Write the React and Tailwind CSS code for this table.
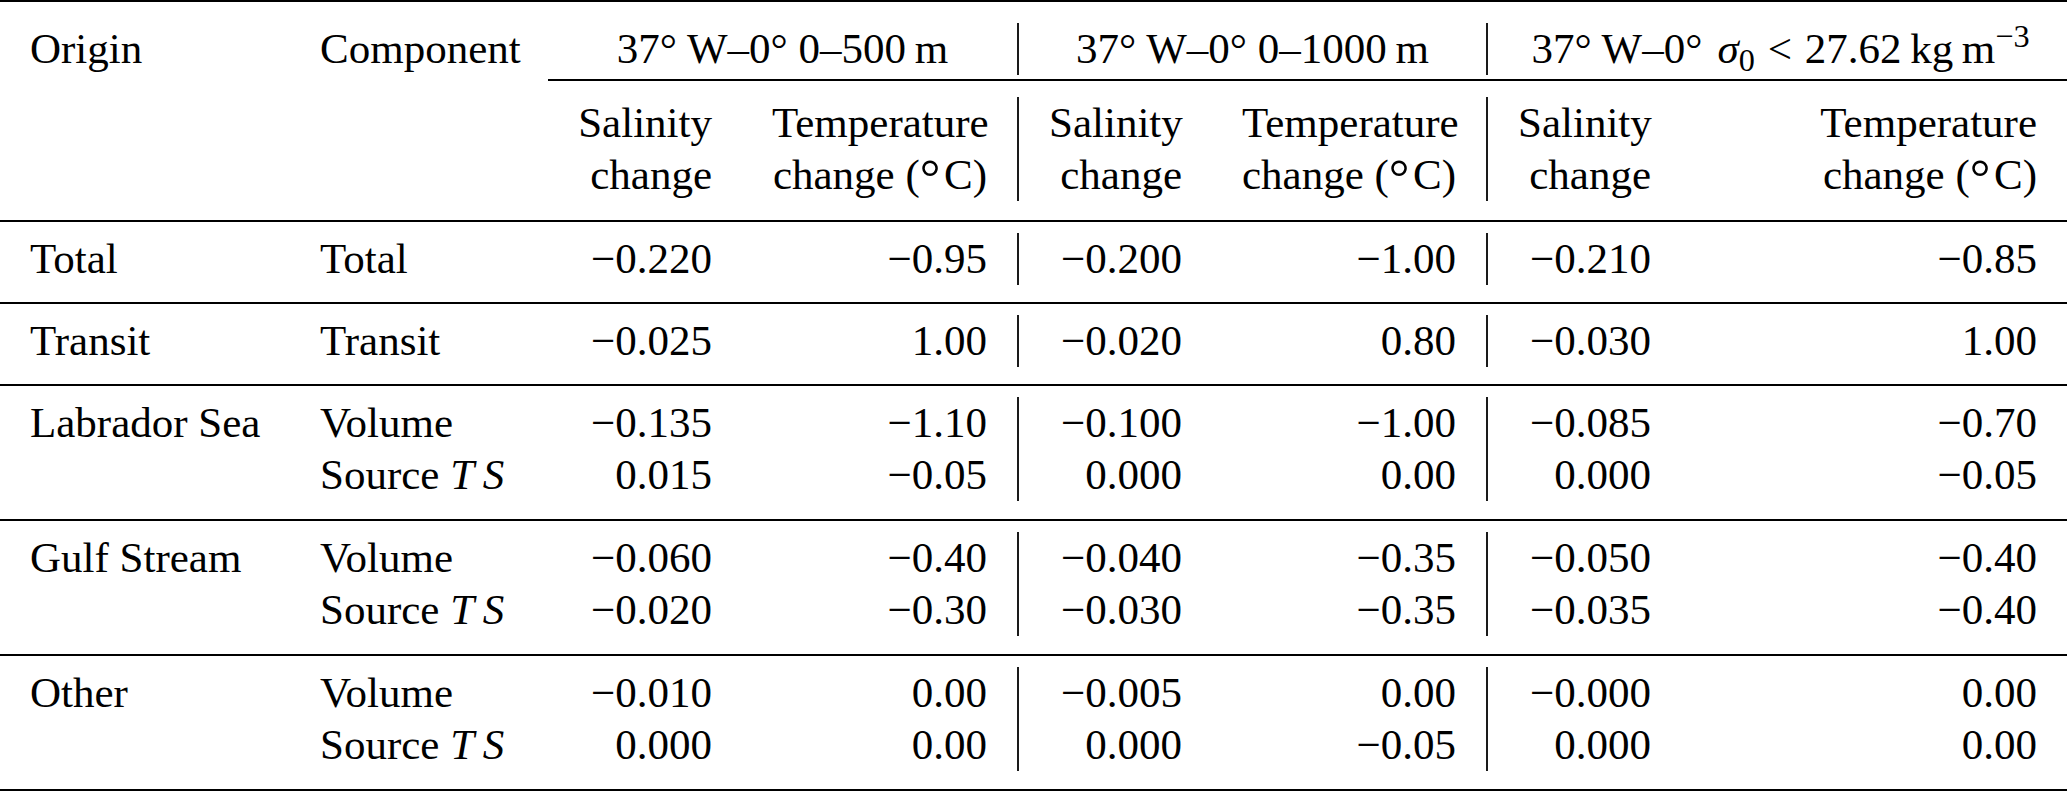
import clsx from 'clsx';

const GRID = 'grid grid-cols-[290px_258px_194px_277px_193px_276px_193px_386px]';

const VOL = 'Volume';
const SRC = (
  <>
    Source <i>T</i>{'\u2009'}<i>S</i>
  </>
);

// the degree sign in the unit is the larger math circle
const DEG_C = (
  <>
    change (<span className="relative top-[0.1em] text-[1.2em] leading-[0]">°</span>
    {'\u200a'}C)
  </>
);

const rows = [
  { origin: 'Total', lines: [['Total', '−0.220', '−0.95', '−0.200', '−1.00', '−0.210', '−0.85']] },
  { origin: 'Transit', lines: [['Transit', '−0.025', '1.00', '−0.020', '0.80', '−0.030', '1.00']] },
  {
    origin: 'Labrador Sea',
    lines: [
      [VOL, '−0.135', '−1.10', '−0.100', '−1.00', '−0.085', '−0.70'],
      [SRC, '0.015', '−0.05', '0.000', '0.00', '0.000', '−0.05'],
    ],
  },
  {
    origin: 'Gulf Stream',
    lines: [
      [VOL, '−0.060', '−0.40', '−0.040', '−0.35', '−0.050', '−0.40'],
      [SRC, '−0.020', '−0.30', '−0.030', '−0.35', '−0.035', '−0.40'],
    ],
  },
  {
    origin: 'Other',
    lines: [
      [VOL, '−0.010', '0.00', '−0.005', '0.00', '−0.000', '0.00'],
      [SRC, '0.000', '0.00', '0.000', '−0.05', '0.000', '0.00'],
    ],
  },
];

// column index -> does it carry the vertical separator on its right
const hasRule = (i) => i === 3 || i === 5;

function Cell({ children, align = 'left', rule, className }) {
  return (
    <div
      className={clsx(
        'px-[30px] whitespace-nowrap',
        align === 'right' && 'text-right',
        align === 'center' && 'text-center',
        align === 'left' && 'text-left',
        rule && 'border-r-2 border-[#1a1a1a]',
        className
      )}
    >
      {children}
    </div>
  );
}

function SubHead({ top, bottom, rule }) {
  return (
    <Cell align="right" rule={rule}>
      <div>{top}</div>
      <div>{bottom}</div>
    </Cell>
  );
}

export default function App() {
  return (
    <div className="min-h-screen bg-white text-black font-['Liberation_Serif','Times_New_Roman',serif] text-[43px] leading-[52px]">
      <div className="w-[2067px]">
        {/* group header */}
        <div className={clsx(GRID, 'border-t-2 border-black pt-[21px] pb-[4px]')}>
          <Cell>Origin</Cell>
          <Cell>Component</Cell>
          <Cell align="center" rule className="col-span-2">
            37° W–0° 0–500{'\u2009'}m
          </Cell>
          <Cell align="center" rule className="col-span-2">
            37° W–0° 0–1000{'\u2009'}m
          </Cell>
          <Cell align="center" className="col-span-2 pr-[24px]">
            37° W–0°{' '}
            <span className="ml-[0.1em]">
              <i>σ</i>
              <sub>0</sub>
            </span>
            <span className="mx-[0.3em]">&lt;</span>27.62{'\u2009'}kg{'\u2009'}m<sup>−3</sup>
          </Cell>
        </div>

        <div className={GRID}>
          <div className="col-start-3 col-span-6 h-[2px] bg-black" />
        </div>

        {/* sub header */}
        <div className={clsx(GRID, 'pt-[16px] pb-[19px]')}>
          <div />
          <div />
          <SubHead top="Salinity" bottom="change" />
          <SubHead top="Temperature" bottom={DEG_C} rule />
          <SubHead top="Salinity" bottom="change" />
          <SubHead top="Temperature" bottom={DEG_C} rule />
          <SubHead top="Salinity" bottom="change" />
          <SubHead top="Temperature" bottom={DEG_C} />
        </div>

        {rows.map((row, ri) => (
          <div
            key={row.origin}
            className={clsx(
              GRID,
              'border-t-2 border-black pt-[11px]',
              row.lines.length > 1 ? 'pb-[18px]' : 'pb-[17px]',
              ri === rows.length - 1 && 'border-b-2'
            )}
          >
            <Cell>{row.origin}</Cell>
            {row.lines[0].map((_, ci) => (
              <Cell key={ci} align={ci > 0 ? 'right' : 'left'} rule={hasRule(ci + 1)}>
                {row.lines.map((line, li) => (
                  <div key={li}>{line[ci]}</div>
                ))}
              </Cell>
            ))}
          </div>
        ))}
      </div>
    </div>
  );
}
